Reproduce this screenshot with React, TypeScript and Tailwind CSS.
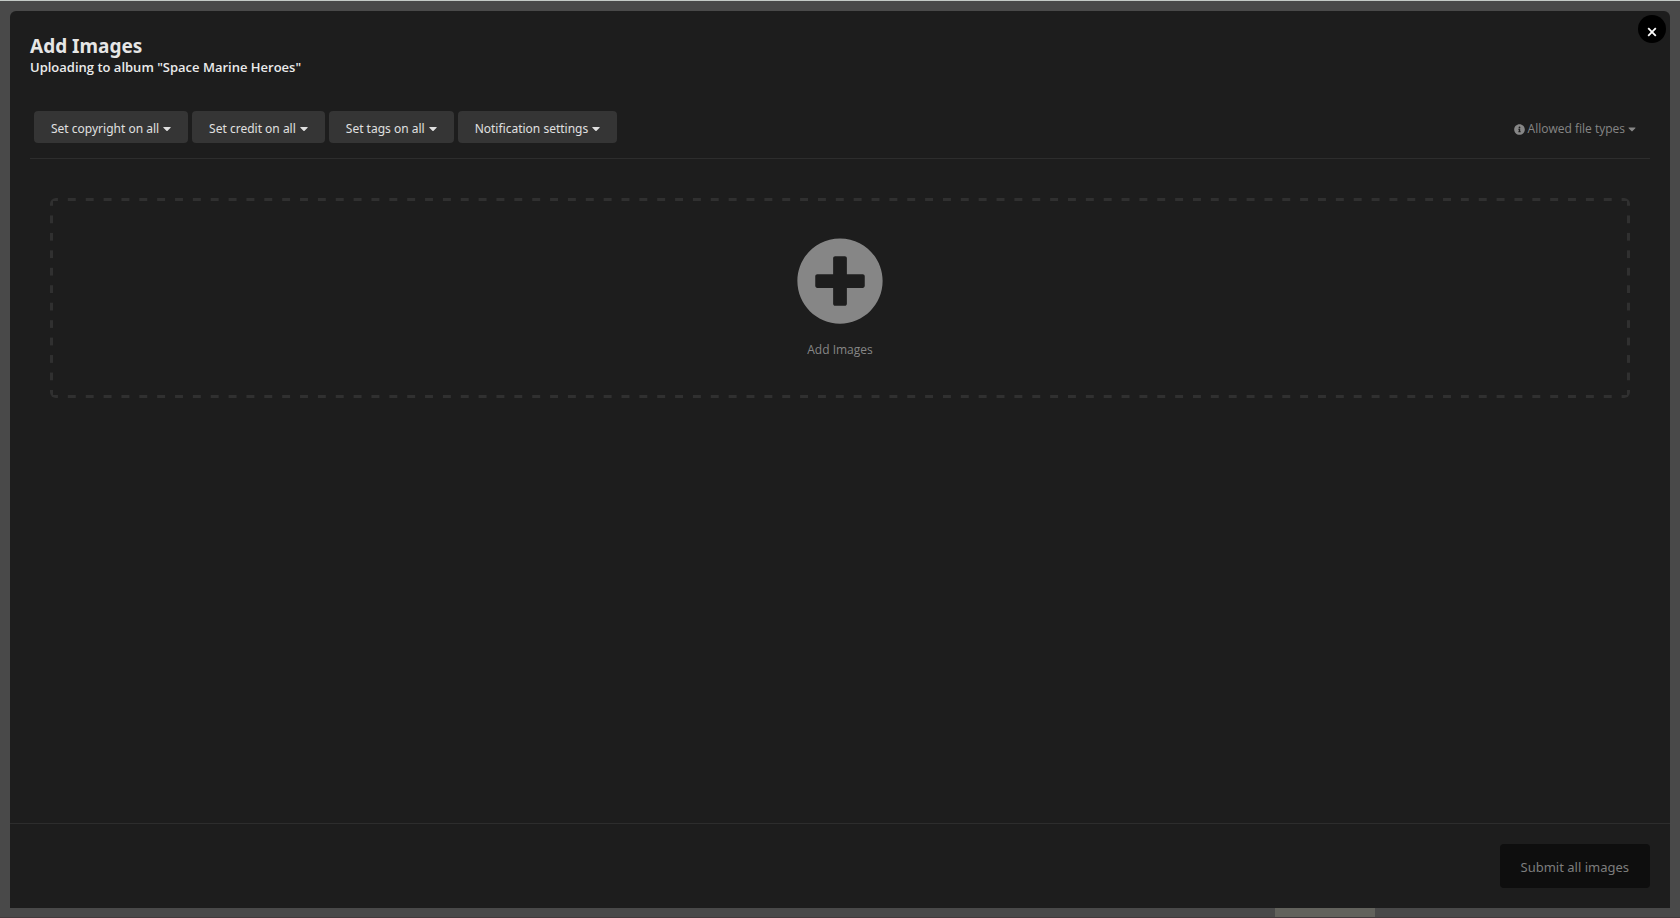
import type { ReactNode } from "react";
import { FaCaretDown, FaInfoCircle, FaPlusCircle } from "react-icons/fa";

const bulkActions = [
  "Set copyright on all",
  "Set credit on all",
  "Set tags on all",
  "Notification settings",
];

export default function App() {
  return (
    <div className="flex min-h-screen flex-col border-t border-[#c4cac6] bg-[#494949] font-['Noto_Sans','Open_Sans',sans-serif]">
      <div
        role="dialog"
        aria-labelledby="upload-title"
        className="relative mx-2.5 mt-2.5 flex flex-1 flex-col rounded-t-md bg-[#1d1d1d]"
      >
        <CloseButton />

        <header className="px-5 pt-[23px]">
          <h1
            id="upload-title"
            className="text-[19px] leading-6 font-bold text-[#e6e6e6]"
          >
            Add Images
          </h1>
          <p className="font-['Open_Sans',sans-serif] text-[13px] leading-[19px] font-semibold text-[#ebebeb]">
            Uploading to album "Space Marine Heroes"
          </p>
        </header>

        <main className="flex-1 px-5 pt-[34px]">
          <div className="flex items-center justify-between border-b border-[#2d2d2d] pr-3.5 pb-[15px] pl-1">
            <div className="flex gap-1">
              {bulkActions.map((label) => (
                <MenuButton key={label}>{label}</MenuButton>
              ))}
            </div>
            <button
              type="button"
              className="flex items-center gap-[3px] pt-1 font-['Open_Sans',sans-serif] text-xs text-[#868686]"
            >
              <FaInfoCircle className="size-[11px]" />
              Allowed file types
              <FaCaretDown className="h-3 w-2" />
            </button>
          </div>
          <DropZone />
        </main>

        <footer className="flex justify-end border-t border-[#2d2d2d] p-5">
          <button
            type="button"
            disabled
            className="h-11 rounded bg-[#0e0e0e] px-[21px] pt-1 text-[13px] text-[#7d7d7d]"
          >
            Submit all images
          </button>
        </footer>
      </div>
      <PageBehind />
    </div>
  );
}

function MenuButton({ children }: { children: ReactNode }) {
  return (
    <button
      type="button"
      className="flex h-8 items-center gap-1 rounded bg-[#353535] px-[17px] pt-0.5 text-xs text-[#e0e0e0]"
    >
      <span className="pt-0.5">{children}</span>
      <FaCaretDown className="h-[13px] w-2" />
    </button>
  );
}

function CloseButton() {
  return (
    <button
      type="button"
      aria-label="Close"
      className="absolute top-1 right-1 flex size-7 items-center justify-center rounded-full bg-black pt-1.5 text-white"
    >
      <svg viewBox="0 0 10 10" className="size-2.5" stroke="currentColor">
        <path d="M1.2 1.2 8.8 8.8M8.8 1.2 1.2 8.8" strokeWidth="1.8" />
      </svg>
    </button>
  );
}

// Dashes are drawn as backgrounds so that every side starts and ends on a dash
function DropZone() {
  return (
    <button
      type="button"
      className="mx-5 mt-[39px] flex h-50 w-[calc(100%-40px)] flex-col items-center rounded-md bg-[linear-gradient(90deg,#303030_8px,transparent_8px),linear-gradient(90deg,#303030_8px,transparent_8px),linear-gradient(#303030_8px,transparent_8px),linear-gradient(#303030_8px,transparent_8px)] bg-[size:calc((100%-8px)/88)_3px,calc((100%-8px)/88)_3px,3px_calc((100%-8px)/11),3px_calc((100%-8px)/11)] bg-[position:left_top,left_bottom,left_top,right_top] [background-repeat:repeat-x,repeat-x,repeat-y,repeat-y] pt-[39px] font-['Open_Sans',sans-serif] text-xs text-[#868686]"
    >
      <FaPlusCircle className="size-[88px]" />
      <span className="mt-[17px]">Add Images</span>
    </button>
  );
}

// Sliver of the dimmed gallery that shows under the dialog
function PageBehind() {
  return (
    <div className="flex h-2.5 border-b border-[#423a3c]">
      <div className="flex-1" />
      <div className="mr-[305px] w-25 bg-[#62625c]" />
    </div>
  );
}
